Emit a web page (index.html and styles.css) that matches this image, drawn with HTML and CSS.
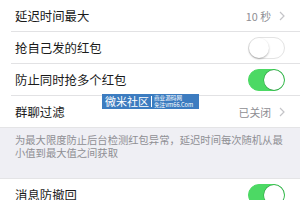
FILE: index.html
```html
<!DOCTYPE html>
<html lang="zh-CN">
<head>
<meta charset="utf-8">
<link rel="stylesheet" href="styles.css">
</head>
<body>
<div class="group">
  <div class="row">
    <span class="label">延迟时间最大</span>
    <span class="value">10 秒</span>
    <svg class="chev" width="6" height="10" viewBox="0 0 6 10"><path d="M1 1 L5 5 L1 9" fill="none" stroke="#c4c4c8" stroke-width="1.2"/></svg>
  </div>
  <div class="row">
    <span class="label">抢自己发的红包</span>
    <span class="switch"><span class="knob"></span></span>
  </div>
  <div class="row">
    <span class="label">防止同时抢多个红包</span>
    <span class="switch on"><span class="knob"></span></span>
  </div>
  <div class="row last">
    <span class="label">群聊过滤</span>
    <span class="value">已关闭</span>
    <svg class="chev" width="6" height="10" viewBox="0 0 6 10"><path d="M1 1 L5 5 L1 9" fill="none" stroke="#c4c4c8" stroke-width="1.2"/></svg>
  </div>
</div>
<div class="footer">为最大限度防止后台检测红包异常，延迟时间每次随机从最小值到最大值之间获取</div>
<div class="group">
  <div class="row last">
    <span class="label">消息防撤回</span>
    <span class="switch on"><span class="knob"></span></span>
  </div>
</div>
<div class="watermark">
  <span class="wm-main">微米社区</span>
  <span class="wm-bar"></span>
  <span class="wm-sub"><span>商业源码网</span><span>免注vm66.Com</span></span>
</div>
</body>
</html>
```
FILE: styles.css
```css
html, body {
  margin: 0;
  padding: 0;
}
body {
  width: 300px;
  height: 200px;
  overflow: hidden;
  background: #efeff4;
  font-family: "Noto Sans CJK SC", "Noto Sans", sans-serif;
  position: relative;
}
.group {
  background: #fff;
}
.group:first-child {
  border-top: 1px solid #e2e2e4;
  margin-top: -1px;
}
.group + .footer + .group {
  border-top: 1px solid #e4e4e6;
}
.row {
  height: 32px;
  display: flex;
  align-items: center;
  padding: 0 15px;
  position: relative;
  box-sizing: border-box;
}
.row::after {
  content: "";
  position: absolute;
  left: 11px;
  right: 0;
  bottom: 0;
  height: 1px;
  background: #e2e2e4;
}
.row.last::after {
  left: 0;
  background: #e4e4e6;
}
.group + .footer + .group .row.last::after {
  display: none;
}
.label {
  flex: 1;
  font-size: 12.4px;
  color: #1a1a1a;
  line-height: 1;
}
.value {
  font-size: 10.8px;
  color: #8e8e93;
  margin-right: 8px;
}
.chev {
  display: block;
}
.switch {
  width: 37px;
  height: 22px;
  border-radius: 11px;
  box-sizing: border-box;
  border: 1px solid #e3e3e3;
  background: #fff;
  position: relative;
}
.switch .knob {
  position: absolute;
  left: 0;
  top: 0;
  width: 20px;
  height: 20px;
  border-radius: 50%;
  background: #fff;
  box-shadow: 0 1px 2px rgba(0,0,0,0.3);
}
.switch.on {
  background: #4cd964;
  border-color: #4cd964;
}
.switch.on .knob {
  left: auto;
  right: 0;
  box-shadow: 0 0 0 0.5px rgba(0,100,20,0.5);
}
.footer {
  height: 50px;
  box-sizing: border-box;
  padding: 5px 15px 0;
  font-size: 10.3px;
  line-height: 13px;
  color: #8e8e93;
}
.watermark {
  position: absolute;
  left: 102px;
  top: 94px;
  width: 97px;
  height: 15px;
  background: #3c7cc0;
  display: flex;
  align-items: center;
  color: #fff;
  box-sizing: border-box;
  padding-left: 3px;
}
.wm-main {
  font-size: 11px;
  line-height: 1;
}
.wm-bar {
  width: 1px;
  height: 11px;
  background: #fff;
  margin: 0 2px 0 2px;
}
.wm-sub {
  display: flex;
  flex-direction: column;
  font-size: 5.6px;
  line-height: 7px;
  white-space: nowrap;
}
```
